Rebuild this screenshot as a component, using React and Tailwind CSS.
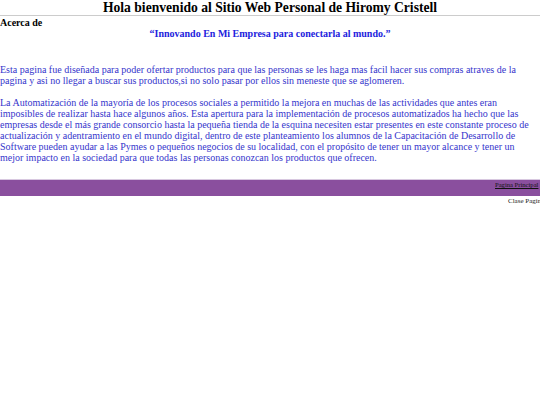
import React from 'react';

const App = () => {
    return (
        <div className="font-['Liberation_Serif',serif] text-black bg-white w-[540px] h-[405px] overflow-hidden">
            <h1 className="text-[13.6px] leading-[15px] font-bold text-center border-b border-[#cccccc]">
                Hola bienvenido al Sitio Web Personal de Hiromy Cristell
            </h1>
            <h3 className="text-[10px] font-bold leading-[11.5px] pt-[0.5px]">Acerca de</h3>
            <p className="text-[10px] font-bold text-[#2222dd] text-center leading-[11.5px]">
                “Innovando En Mi Empresa para conectarla al mundo.”
            </p>
            <div className="text-[10px] leading-[11.1px] text-[#3535cc] pt-[24.5px]">
                <p>
                    Esta pagina fue diseñada para poder ofertar productos para que las personas se les haga mas facil hacer sus compras atraves de la pagina y asi no llegar a buscar sus productos,si no solo pasar por ellos sin meneste que se aglomeren.
                </p>
                <p className="mt-[10.4px]">
                    La Automatización de la mayoría de los procesos sociales a permitido la mejora en muchas de las actividades que antes eran imposibles de realizar hasta hace algunos años. Esta apertura para la implementación de procesos automatizados ha hecho que las empresas desde el más grande consorcio hasta la pequeña tienda de la esquina necesiten estar presentes en este constante proceso de actualización y adentramiento en el mundo digital, dentro de este planteamiento los alumnos de la Capacitación de Desarrollo de Software pueden ayudar a las Pymes o pequeños negocios de su localidad, con el propósito de tener un mayor alcance y tener un mejor impacto en la sociedad para que todas las personas conozcan los productos que ofrecen.
                </p>
            </div>
            <div className="mt-[16px] border-t border-[#d8c8e0] bg-[#8a4f9e] h-[17px] overflow-hidden whitespace-nowrap pl-[495px] text-[6.6px] leading-[8px] pt-[1px]">
                <a href="#" className="underline text-[#111111]">Pagina Principal</a>
            </div>
            <div className="overflow-hidden whitespace-nowrap pl-[508px] text-[7px] leading-[9px] pt-[1px] text-[#222222]">
                Clase Pagina Principal
            </div>
        </div>
    );
};

export default App;
